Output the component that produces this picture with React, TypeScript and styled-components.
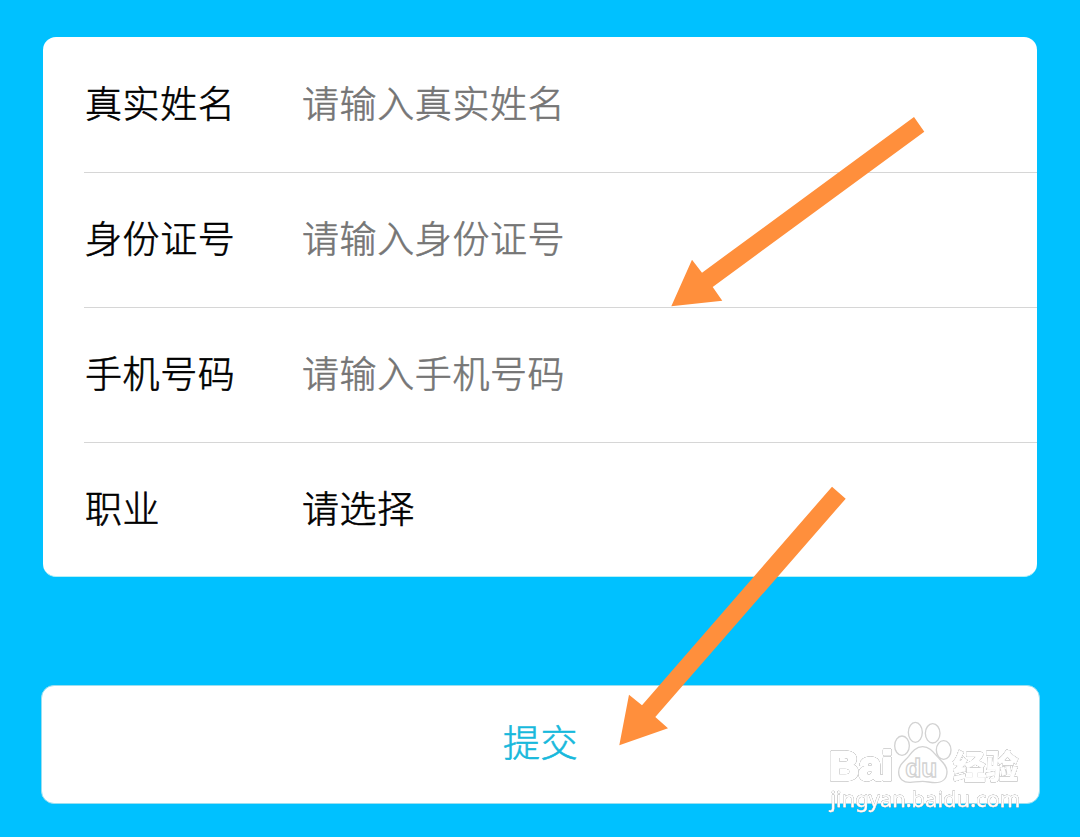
import React from "react";
import styled, { createGlobalStyle } from "styled-components";

const GlobalStyle = createGlobalStyle`
  body {
    margin: 0;
    background: #00c1ff;
    font-family: "Liberation Sans", "Noto Sans CJK SC", sans-serif;
  }
`;

const Page = styled.main`
  position: relative;
  box-sizing: border-box;
  width: 1080px;
  height: 837px;
  padding: 37px 40px 0 41px;
  overflow: hidden;
  background: #00c1ff;
`;

const Card = styled.section`
  box-sizing: border-box;
  height: 540px;
  margin: 0 3px 108px 2px;
  padding-left: 41px;
  border-radius: 13px;
  border-bottom: 1px solid #b5f0f6;
  background: white;
`;

const Row = styled.div`
  display: flex;
  align-items: center;
  box-sizing: border-box;
  height: 135px;
  padding-bottom: 7px;
  border-bottom: 1px solid #d6d6d6;
  font-family: "Noto Sans CJK SC", sans-serif;
  font-size: 37px;
  font-weight: 300;
  line-height: 54px;
  letter-spacing: 0.6px;
  color: black;
  -webkit-text-stroke-width: 0.6px;

  &:first-child {
    height: 136px;
    padding-bottom: 6px;
  }

  &:last-child {
    height: 133px;
    padding-bottom: 6px;
    border-bottom: none;
  }
`;

const Label = styled.span`
  width: 217px;
  padding-left: 1px;
`;

const Value = styled.span<{ $muted?: boolean }>`
  color: ${(props) => (props.$muted ? "#757575" : "black")};
`;

const SubmitButton = styled.button`
  display: block;
  box-sizing: border-box;
  width: 100%;
  height: 119px;
  padding: 0 0 7px;
  border: 1px solid #9adff0;
  border-radius: 13px;
  background: white;
  color: #17b9dc;
  font-family: "Noto Sans CJK SC", sans-serif;
  font-size: 37px;
  font-weight: 300;
  line-height: 54px;
  letter-spacing: 0.6px;
  -webkit-text-stroke-width: 0.6px;
`;

const Arrows = styled.svg`
  position: absolute;
  top: 0;
  left: 0;
  fill: #ff8f3c;
  pointer-events: none;
`;

const Watermark = styled.svg`
  position: absolute;
  top: 710px;
  left: 810px;
  pointer-events: none;
`;

// white shapes that only show by the thin grey rim around them
const Embossed = styled.g<{ $weight?: number }>`
  fill: white;
  stroke: white;
  stroke-width: ${(props) => props.$weight ?? 0}px;
  stroke-linejoin: round;
  filter: drop-shadow(0 0 2px #8c8c8c) drop-shadow(0 0 1.5px #b0b0b0);
`;

const Outlined = styled.g`
  fill: white;
  stroke: #d2d2d2;
  stroke-width: 4px;
`;

const Brand = styled.text`
  font-family: "Liberation Sans", sans-serif;
  font-weight: bold;
`;

const BrandCn = styled.text`
  font-family: "Noto Sans CJK SC", sans-serif;
  font-weight: 900;
  font-size: 99px;
`;

const Url = styled.text`
  font-family: "Noto Sans", "Open Sans", sans-serif;
  font-size: 64px;
`;

const fields = [
  { label: "真实姓名", value: "请输入真实姓名", muted: true },
  { label: "身份证号", value: "请输入身份证号", muted: true },
  { label: "手机号码", value: "请输入手机号码", muted: true },
  { label: "职业", value: "请选择", muted: false },
];

export default function App() {
  return (
    <>
      <GlobalStyle />
      <Page>
        <Card>
          {fields.map((field) => (
            <Row key={field.label}>
              <Label>{field.label}</Label>
              <Value $muted={field.muted}>{field.value}</Value>
            </Row>
          ))}
        </Card>
        <SubmitButton type="button">提交</SubmitButton>
        <Arrows width="1080" height="837" viewBox="0 0 1080 837">
          <path d="M671.3 306.3 692 259.7 702 272.7 914 117 924.3 131.7 712.7 287 722.3 300.7Z" />
          <path d="M619.3 745.3 629 694.7 642 705.3 832 486.7 845.7 498.7 655.3 717 668 728.3Z" />
        </Arrows>
        <Watermark width="230" height="127" viewBox="0 0 690 381">
          <Embossed $weight={9}>
            <Brand x="57" y="211" fontSize="124" textLength="192" lengthAdjust="spacingAndGlyphs">
              Bai
            </Brand>
          </Embossed>
          <Outlined>
            <ellipse cx="276" cy="107" rx="22" ry="29" />
            <ellipse cx="316" cy="67" rx="21" ry="30" />
            <ellipse cx="368" cy="70" rx="22" ry="29" />
            <ellipse cx="401" cy="120" rx="22" ry="28" />
            <path d="M338 110C318 110 306 126 296 139C282 155 266 165 266 186C266 207 281 218 301 217C315 216 325 214 338 214C351 214 361 218 375 218C397 218 411 206 411 185C411 166 396 155 382 140C370 126 358 110 338 110Z" />
            <Brand x="286" y="201" fontSize="80" textLength="96" lengthAdjust="spacingAndGlyphs">
              du
            </Brand>
          </Outlined>
          <Embossed $weight={2}>
            <BrandCn x="428" y="208" textLength="197" lengthAdjust="spacingAndGlyphs">
              经验
            </BrandCn>
          </Embossed>
          <Embossed $weight={1}>
            <Url x="61" y="290" textLength="570" lengthAdjust="spacingAndGlyphs">
              jingyan.baidu.com
            </Url>
          </Embossed>
        </Watermark>
      </Page>
    </>
  );
}
